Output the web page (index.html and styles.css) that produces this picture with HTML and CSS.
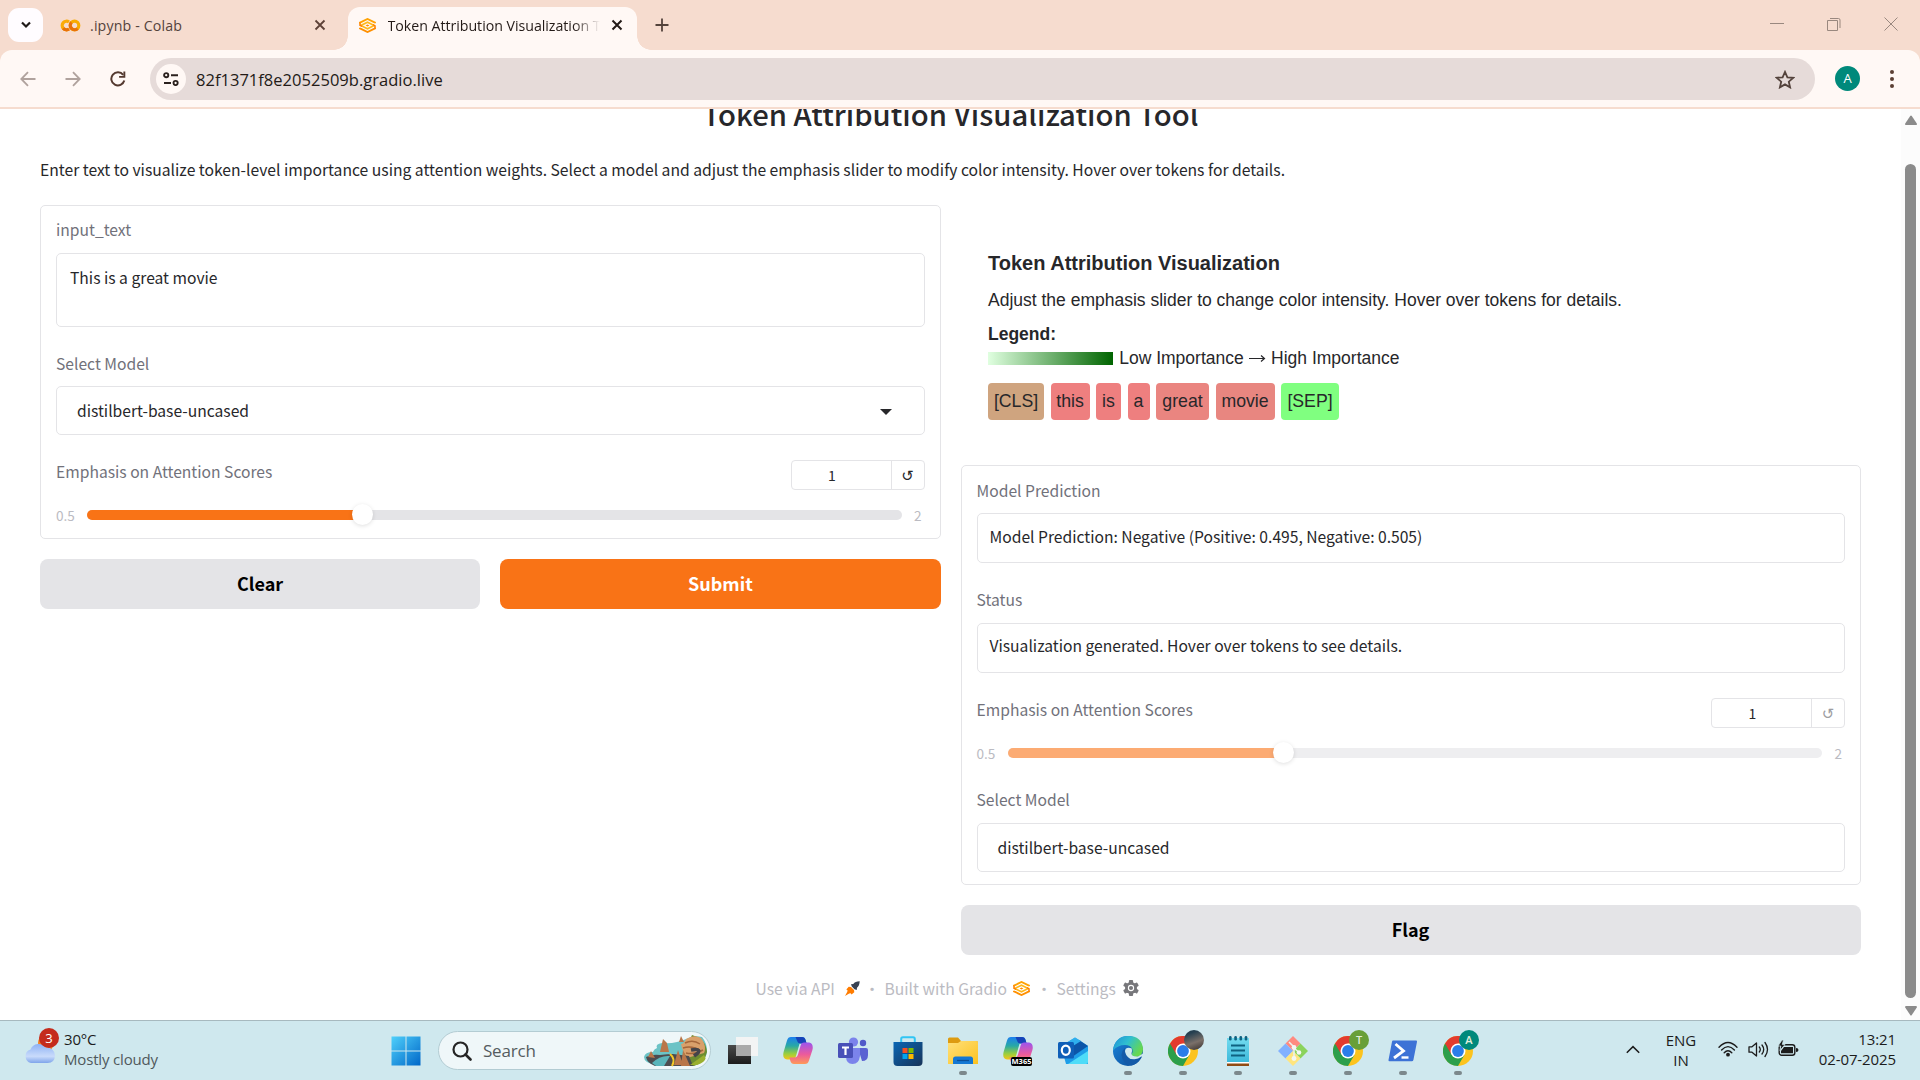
FILE: index.html
```html
<!DOCTYPE html>
<html lang="en">
<head>
<meta charset="utf-8">
<title>Token Attribution Visualization Tool</title>
<link rel="stylesheet" href="styles.css">
</head>
<body>
<svg class="defs" width="0" height="0" aria-hidden="true">
  <defs>
    <linearGradient id="win" x1="0" y1="0" x2="1" y2="1"><stop offset="0" stop-color="#4fd0fb"/><stop offset="1" stop-color="#0067c8"/></linearGradient>
    <linearGradient id="cloud" x1="0" y1="0" x2="0" y2="1"><stop offset="0" stop-color="#8eb2f4"/><stop offset=".65" stop-color="#c9dbfb"/><stop offset="1" stop-color="#7fa5ea"/></linearGradient>
    <linearGradient id="copL" x1="0" y1="0" x2="0" y2="1"><stop offset="0" stop-color="#1b7ff0"/><stop offset=".4" stop-color="#29a9a4"/><stop offset=".75" stop-color="#9bcf3c"/><stop offset="1" stop-color="#f7c516"/></linearGradient>
    <linearGradient id="copR" x1="0" y1="0" x2="0" y2="1"><stop offset="0" stop-color="#9a55ee"/><stop offset=".55" stop-color="#ec5a9c"/><stop offset="1" stop-color="#ff9a58"/></linearGradient>
    <linearGradient id="store" x1="0" y1="0" x2="1" y2="1"><stop offset="0" stop-color="#0a66b4"/><stop offset="1" stop-color="#173358"/></linearGradient>
    <linearGradient id="fold" x1="0" y1="0" x2="1" y2="1"><stop offset="0" stop-color="#ffe07a"/><stop offset="1" stop-color="#fcc21f"/></linearGradient>
    <linearGradient id="edgeG" x1="0" y1="0" x2="1" y2=".5"><stop offset="0" stop-color="#1f8fd8"/><stop offset=".5" stop-color="#2fbfd0"/><stop offset="1" stop-color="#67d84e"/></linearGradient>
    <linearGradient id="edgeB" x1="0" y1="0" x2="1" y2="1"><stop offset="0" stop-color="#1a86de"/><stop offset="1" stop-color="#0d4a94"/></linearGradient>
    <linearGradient id="note" x1="0" y1="0" x2="0" y2="1"><stop offset="0" stop-color="#73dbef"/><stop offset="1" stop-color="#35b5d8"/></linearGradient>
    <linearGradient id="tvd" x1="0" y1="0" x2="0" y2="1"><stop offset="0" stop-color="#4a4a4a"/><stop offset="1" stop-color="#1c1c1c"/></linearGradient>
    <symbol id="gradio" viewBox="0 0 17 15">
      <path d="M1 5.300V4.600L8.500 1l7.500 3.600v.700" fill="none" stroke="#ffa305" stroke-width="1.900"/>
      <path d="M1 9.700v.700L8.500 14l7.500-3.600v-.700" fill="none" stroke="#ff9000" stroke-width="1.900"/>
      <path d="M1.800 7.500L8.500 4.200l6.700 3.300-6.700 3.300z" fill="none" stroke="#ffb81c" stroke-width="1.700"/>
      <path d="M1 4.500v2.500l2 1.500M16 10.500V8l-2-1.500" fill="none" stroke="#ff7c00" stroke-width="1.500"/>
      <path d="M6.600 7.500l1.900-1 1.900 1-1.900 1z" fill="#ff8a00"/>
    </symbol>
    <symbol id="chrome" viewBox="0 0 30 30">
      <circle cx="15" cy="15" r="15" fill="#fcc31e"/>
      <path d="M15 15L2 7.500A15 15 0 0 0 15 30l6.500-11.300z" fill="#2c9f4b"/>
      <path d="M15 7.500H28A15 15 0 0 0 2 7.500l6.500 11.300z" fill="#e33b2e"/>
      <circle cx="15" cy="15" r="7.500" fill="#fff"/><circle cx="15" cy="15" r="5.900" fill="#2b7de9"/>
    </symbol>
    <symbol id="copilot" viewBox="0 0 30 30">
      <path d="M8 1h11c2 0 3 1 3.600 3l1 3.500h-7L13 20c-.7 2.500-2 3.500-4 3.500H4C.6 23.500-.4 20 .6 16L4 4.500C4.700 2 6 1 8 1z" fill="url(#copL)"/>
      <path d="M12.500 1H19c2 0 3 1 3.600 3l1 3.500h-6.100c-2 0-2.900-1-3.500-3z" fill="#1643b8"/>
      <path d="M22 28H11c-2 0-3-1-3.600-3l-1-3.500h5c2 0 3-1 3.600-3l2.600-9c.6-2 1.600-3 3.400-3h5c3.400 0 4.400 4 3.400 7.500L26 24.500c-.7 2.500-2 3.500-4 3.500z" fill="url(#copR)"/>
    </symbol>
  </defs>
</svg>

<div class="screen">
  <header class="tabstrip">
    <button class="tab-search"><svg width="12" height="8" viewBox="0 0 12 8"><path d="M2 1.500L6 5.500 10 1.500" fill="none" stroke="#1f1a18" stroke-width="2.200"/></svg></button>
    <div class="tab tab-idle">
      <svg width="21" height="13" viewBox="0 0 21 13"><g fill="none" stroke-width="3.200"><circle cx="14.500" cy="6.500" r="4.300" stroke="#f9ab00"/><path d="M11.460 3.460a4.300 4.300 0 0 0 6.080 6.080" stroke="#e8710a"/><path d="M9 3a4.300 4.300 0 1 0 0 7" stroke="#fbab08"/><path d="M3.200 9.300a4.300 4.300 0 0 0 5.800.700" stroke="#e8710a"/></g></svg>
      <span class="tab-name">.ipynb - Colab</span>
      <svg class="x" width="12" height="12" viewBox="0 0 12 12"><path d="M1.500 1.500l9 9m0-9l-9 9" stroke="#5d4138" stroke-width="1.800"/></svg>
    </div>
    <div class="tab tab-active">
      <svg width="17" height="15"><use href="#gradio"/></svg>
      <span class="tab-name">Token Attribution Visualization T</span>
      <svg class="x" width="12" height="12" viewBox="0 0 12 12"><path d="M1.500 1.500l9 9m0-9l-9 9" stroke="#231a17" stroke-width="2"/></svg>
    </div>
    <svg class="newtab" width="14" height="14" viewBox="0 0 14 14"><path d="M7 .5v13M.5 7h13" stroke="#54433c" stroke-width="1.800"/></svg>
    <div class="winctl">
      <svg width="14" height="14" viewBox="0 0 14 14"><path d="M0 6.500h14" stroke="#99887f" stroke-width="1"/></svg>
      <svg width="14" height="14" viewBox="0 0 14 14"><path d="M.5 3.500h10v10H.5zM3 1.500h8.500q1.500 0 1.500 1.500V11" fill="none" stroke="#99887f"/></svg>
      <svg width="14" height="14" viewBox="0 0 14 14"><path d="M.5.500l13 13m0-13l-13 13" stroke="#99887f"/></svg>
    </div>
  </header>

  <div class="toolbar-wrap">
  <nav class="toolbar">
    <div class="nav-icons">
      <svg width="16" height="16" viewBox="0 0 16 16"><path d="M15.500 8H1.500M8 1.200L1.300 8 8 14.800" fill="none" stroke="#b0a29d" stroke-width="1.800"/></svg>
      <svg width="16" height="16" viewBox="0 0 16 16"><path d="M.5 8h14M8 1.200L14.700 8 8 14.800" fill="none" stroke="#b0a29d" stroke-width="1.800"/></svg>
      <svg width="16" height="16" viewBox="0 0 16 16"><path d="M13.200 3.900A6.600 6.600 0 1 0 14.300 9.600" fill="none" stroke="#54392f" stroke-width="2"/><path d="M15.300.6v6.200H9.100V4.900h4.300V.6z" fill="#54392f"/></svg>
    </div>
    <div class="omnibox">
      <span class="site"><svg width="16" height="14" viewBox="0 0 16 14"><g fill="none" stroke="#2b211e" stroke-width="1.900"><circle cx="3.200" cy="3.200" r="2.100"/><path d="M8 3.200h7M1 11h7"/><circle cx="12.600" cy="11" r="2.100"/></g></svg></span>
      <span class="url">82f1371f8e2052509b.gradio.live</span>
      <svg class="star" width="20" height="19" viewBox="0 0 20 19"><path d="M10 1.900l2.400 5.400 5.800.5-4.400 3.900 1.300 5.700L10 14.400l-5.100 3 1.300-5.700L1.800 7.800l5.800-.5z" fill="none" stroke="#54433c" stroke-width="1.800"/></svg>
    </div>
    <span class="avatar">A</span>
    <svg class="kebab" width="6" height="20" viewBox="0 0 6 20"><g fill="#5b3f33"><circle cx="3" cy="3" r="2"/><circle cx="3" cy="10" r="2"/><circle cx="3" cy="17" r="2"/></g></svg>
  </nav>
  </div>

  <div class="viewport">
    <main class="page">
      <h1 class="title">Token Attribution Visualization Tool</h1>
      <p class="intro">Enter text to visualize token-level importance using attention weights. Select a model and adjust the emphasis slider to modify color intensity. Hover over tokens for details.</p>
      <div class="columns">
        <section class="col">
          <div class="card card-in">
            <label class="lab">input_text</label>
            <div class="field area">This is a great movie</div>
            <label class="lab">Select Model</label>
            <div class="field pick">distilbert-base-uncased<svg class="caret" width="12" height="6" viewBox="0 0 12 6"><path d="M0 0h12L6 6z" fill="#27272a"/></svg></div>
            <div class="range-head"><label class="lab">Emphasis on Attention Scores</label><div class="num"><span>1</span><b>↺</b></div></div>
            <div class="range"><span class="lo">0.5</span><div class="track"><i class="fill"></i><i class="thumb"></i></div><span class="hi">2</span></div>
          </div>
          <div class="buttons"><button class="btn grey">Clear</button><button class="btn orange">Submit</button></div>
        </section>
        <section class="col">
          <div class="viz">
            <h3>Token Attribution Visualization</h3>
            <p class="viz-note">Adjust the emphasis slider to change color intensity. Hover over tokens for details.</p>
            <p class="legend-name">Legend:</p>
            <div class="legend"><i></i><span>Low Importance</span><svg width="17" height="9" viewBox="0 0 17 9"><path d="M0 4.500h15.500M12 1.500l3.500 3-3.500 3" fill="none" stroke="#27272a" stroke-width="1.200"/></svg><span>High Importance</span></div>
            <div class="tokens"><span class="tok t0">[CLS]</span><span class="tok t1">this</span><span class="tok t2">is</span><span class="tok t3">a</span><span class="tok t4">great</span><span class="tok t5">movie</span><span class="tok t6">[SEP]</span></div>
          </div>
          <div class="card card-out">
            <label class="lab">Model Prediction</label>
            <div class="field line">Model Prediction: Negative (Positive: 0.495, Negative: 0.505)</div>
            <label class="lab">Status</label>
            <div class="field line status">Visualization generated. Hover over tokens to see details.</div>
            <div class="range-head"><label class="lab">Emphasis on Attention Scores</label><div class="num dim"><span>1</span><b>↺</b></div></div>
            <div class="range off"><span class="lo">0.5</span><div class="track"><i class="fill"></i><i class="thumb"></i></div><span class="hi">2</span></div>
            <label class="lab">Select Model</label>
            <div class="field pick">distilbert-base-uncased</div>
          </div>
          <button class="btn grey flag">Flag</button>
        </section>
      </div>
      <footer class="foot">
        <span class="f1">Use via API</span>
        <svg class="rocket" width="15" height="15" viewBox="0 0 15 15"><path d="M14.700.3Q10 .5 8.300 3L6 3.300 6.800 5.500 9.500 8.200l2.200.8.300-2.300Q14.500 5 14.700.3z" fill="#384152"/><path d="M6 6l3 3 .3 2.200-2.800 2.300-.8-1.200-1.500.2L0 15l2.300-4.200L2.500 9.200 1.300 8.500 3.700 5.700z" fill="#ff7c00"/></svg>
        <span class="dot">·</span>
        <span class="f2">Built with Gradio</span>
        <svg class="fg" width="17" height="15"><use href="#gradio"/></svg>
        <span class="dot">·</span>
        <span class="f3">Settings</span>
        <svg class="gear" width="16" height="16" viewBox="0 0 16 16"><g fill="#77777b"><rect x="5.900" y="0" width="4.200" height="16" rx="1"/><rect x="5.900" y="0" width="4.200" height="16" rx="1" transform="rotate(60 8 8)"/><rect x="5.900" y="0" width="4.200" height="16" rx="1" transform="rotate(120 8 8)"/><circle cx="8" cy="8" r="6"/></g><circle cx="8" cy="8" r="2.600" fill="none" stroke="#fff" stroke-width="1.100"/></svg>
      </footer>
    </main>
    <aside class="scroll">
      <svg width="12" height="10" viewBox="0 0 12 10"><path d="M5.200 1q.8-1 1.600 0l5 7.500q.5 1.500-1 1.500H1.200Q-.3 10 .2 8.500z" fill="#8b8b8b"/></svg>
      <i class="bar"></i>
      <svg width="12" height="10" viewBox="0 0 12 10"><path d="M5.200 9q.8 1 1.600 0l5-7.500Q12.300 0 10.800 0H1.200Q-.3 0 .2 1.500z" fill="#8b8b8b"/></svg>
    </aside>
  </div>

  <div class="taskbar">
    <div class="weather">
      <span class="w-icon"><svg width="32" height="38" viewBox="0 0 32 38"><circle cx="22" cy="16" r="8" fill="#f58220"/><path d="M7 36a7 7 0 0 1-.5-13.500A9 9 0 0 1 22 20.500a8 8 0 0 1 9 8q-.3 7.500-7.500 7.500z" fill="url(#cloud)"/></svg><em>3</em></span>
      <span class="w-text"><span>30°C</span><span class="w-sub">Mostly cloudy</span></span>
    </div>
    <div class="dock">
      <svg class="start" width="30" height="30" viewBox="0 0 30 30"><path d="M.5.500h14v14H.5zM15.500.500h14v14h-14zM.5 15.500h14v14H.5zM15.500 15.500h14v14h-14z" fill="url(#win)"/></svg>
      <div class="search">
        <svg width="20" height="20" viewBox="0 0 20 20"><circle cx="8.500" cy="8.500" r="7" fill="none" stroke="#252525" stroke-width="2.200"/><path d="M13.500 13.500l5 5" stroke="#252525" stroke-width="2.600" stroke-linecap="round"/></svg>
        <span>Search</span>
        <svg class="scene" width="64" height="32" viewBox="0 0 64 32"><path d="M0 22Q1 17 9 17q1-3 4-4-2-4 5-5 14 1 24-4 8-4 16-2 5 6 5 14 0 9-12 14H12Q0 28 0 22z" fill="#6cc3c6"/><path d="M48 0q14 4 15 17-2 10-13 14H34z" fill="#6d8c2f"/><path d="M42 4q8-5 15-1 6 8 3 15l-17 5q-5-8-6-14 3 0 5-5z" fill="#d9a06b"/><path d="M41 8q8-4 15 1M39 13q9-3 18 3M42 18q9 2 17-3" stroke="#a5663a" stroke-width="1.500" fill="none"/><path d="M47 15q10-2 7 3l-4 3" fill="none" stroke="#44444a" stroke-width="3.500"/><path d="M2 22q6-3 14-2 8-1 13-1l16 2 4 10H11Q3 28 2 22z" fill="#4c4c50"/><path d="M8 28q8-8 18-7l-6 10H12z" fill="#5ab4ba"/><path d="M26 19q6 5 2 12" stroke="#f7c925" stroke-width="2" fill="none"/><path d="M16 17L19 4l4 4 2 9zM4 22l3-6 4 7zM35 7l2-6 3 6zM30 30l4-15 5 15zM37 31l2-16 7 16z" fill="#b9764a"/><path d="M46 30l14-10q5 6-7 10z" fill="#9aaf2f"/></svg>
      </div>
      <div class="app"><svg class="tv" width="30" height="30" viewBox="0 0 30 30"><path d="M0 9h23v19H0z" fill="url(#tvd)"/><path d="M8 1h22v19H8z" fill="#f3f4f4"/><path d="M8 9h15v11H8z" fill="#aaa"/></svg></div>
      <div class="app"><svg width="30" height="30"><use href="#copilot"/></svg></div>
      <div class="app"><svg width="30" height="30" viewBox="0 0 30 30"><circle cx="25" cy="7" r="3.200" fill="#5059c9"/><path d="M20 12h8q2 0 2 2v5q0 6-6 6z" fill="#5b62d2"/><circle cx="15.500" cy="6" r="4.600" fill="#7b83eb"/><path d="M8 12h14v8q-1 8-7.500 8T8 20z" fill="#7b83eb"/><rect y="7" width="15" height="15" rx="1.500" fill="#4850b8"/><path d="M4 10.500h7v2H8.600V19H6.400v-6.500H4z" fill="#fff"/></svg></div>
      <div class="app"><svg width="30" height="30" viewBox="0 0 30 30"><path d="M8.200 6.500V3q0-1.700 1.700-1.700h10.200q1.700 0 1.700 1.700v3.500" fill="none" stroke="#32c5f4" stroke-width="2"/><path d="M.5 6h29v20q0 4-4 4h-21q-4 0-4-4z" fill="url(#store)"/><path d="M9.500 12h5v5h-5z" fill="#f25022"/><path d="M15.500 12h5v5h-5z" fill="#7fba00"/><path d="M9.500 18h5v5h-5z" fill="#00a4ef"/><path d="M15.500 18h5v5h-5z" fill="#ffb900"/></svg></div>
      <div class="app run"><svg width="30" height="30" viewBox="0 0 30 30"><path d="M0 3q0-1.500 1.500-1.500H10L13 5h15.500q1.500 0 1.500 1.500V14H0z" fill="#dd9b10"/><path d="M0 7h10l3-2h15.500Q30 5 30 6.500V28H0z" fill="url(#fold)"/><path d="M5 28v-5q0-2.500 2.500-2.500h15q2.500 0 2.500 2.500v5z" fill="#1478d4"/><path d="M9 24.500h12" stroke="#0b4f98" stroke-width="1.300"/></svg></div>
      <div class="app"><svg width="30" height="30"><use href="#copilot"/></svg><em class="m365">M365</em></div>
      <div class="app"><svg width="30" height="30" viewBox="0 0 30 30"><path d="M3 10L17 1.500 30 10v18H8z" fill="#1e9de8"/><path d="M12 10l9-6 9 6-16 11z" fill="#0c55a8"/><path d="M7 8l10-6.500L23 5 10 13z" fill="#2fb0ee"/><path d="M10 28l20-13v11q0 2-2 2z" fill="#4fdcf8"/><rect y="6" width="16" height="16.500" rx="1.500" fill="#0f5fb8"/><ellipse cx="7.800" cy="14.200" rx="4" ry="4.600" fill="none" stroke="#fff" stroke-width="2.200"/></svg></div>
      <div class="app run"><svg width="30" height="30" viewBox="0 0 30 30"><circle cx="15" cy="15" r="15" fill="url(#edgeB)"/><path d="M.3 12.500Q3 0 15 0q14 0 15 13 0 7-7 8-5 0-4.500-3 2-2 .8-5-2-4-7.300-4Q4.500 9 .3 14.500z" fill="url(#edgeG)"/><path d="M18.500 12.300q-7-2-6.500 4.500 1.500 7 9.500 6.500 4-.5 6.500-2.500l3-1V17l-6 3.500q-7 .5-6.500-3.500 1-2 0-4.700z" fill="#cfe8ee"/><path d="M12 12q-7 6 0 15 3 3 7 2.500 6-2 8.500-7-6 3-11 0-5.500-4-4.500-10.500z" fill="#145aa8"/></svg></div>
      <div class="app run"><svg width="30" height="30"><use href="#chrome"/></svg><em class="who pic"></em></div>
      <div class="app run"><svg width="30" height="30" viewBox="0 0 30 30"><path d="M4 2h22v27H4z" fill="url(#note)"/><path d="M4 26.500h22V30H4z" fill="#8f4b14"/><path d="M4 26h22v1.500H4z" fill="#fff"/><path d="M8 9.500h14M8 14.500h14M8 19.500h14" stroke="#0f6281" stroke-width="2"/><g fill="#0f6281"><rect x="6" width="2.600" height="4.500" rx="1.200"/><rect x="11.300" width="2.600" height="4.500" rx="1.200"/><rect x="16.500" width="2.600" height="4.500" rx="1.200"/><rect x="21.700" width="2.600" height="4.500" rx="1.200"/></g></svg></div>
      <div class="app run"><svg width="30" height="30" viewBox="0 0 30 30"><path d="M15 0l7.500 7.500L15 15 7.500 7.500z" fill="#ff8a80"/><path d="M22.500 7.500L30 15l-7.500 7.500L15 15z" fill="#8bd35c"/><path d="M7.500 7.500L15 15l-7.500 7.500L0 15z" fill="#82b1ff"/><path d="M15 15l7.500 7.500L15 30l-7.500-7.500z" fill="#ffe57f"/><path d="M11 6l5 5v12M16 12l5 4.500" fill="none" stroke="#e9f3ee" stroke-width="1.600"/><g fill="#f3f7f4"><circle cx="16" cy="11.500" r="2.400"/><circle cx="21" cy="16.500" r="2.300"/><circle cx="16" cy="22.500" r="2.400"/></g></svg></div>
      <div class="app run"><svg width="30" height="30"><use href="#chrome"/></svg><em class="who green">T</em></div>
      <div class="app run"><svg width="30" height="30" viewBox="0 0 30 30"><path d="M5 4.500h23q1.200 0 1 1.200L25.400 24q-.3 1.300-1.600 1.300H1.500q-1.200 0-1-1.200L4 5.800Q4.200 4.500 5 4.500z" fill="#3d72d6"/><path d="M7.500 8l8 7-9.500 7" fill="none" stroke="#fff" stroke-width="2.800"/><path d="M13.500 21.500h7" stroke="#fff" stroke-width="2.400"/></svg></div>
      <div class="app run"><svg width="30" height="30"><use href="#chrome"/></svg><em class="who teal">A</em></div>
    </div>
    <div class="tray">
      <svg class="up" width="14" height="9" viewBox="0 0 14 9"><path d="M.8 7.800L7 1.600l6.200 6.200" fill="none" stroke="#1c1c1c" stroke-width="1.500"/></svg>
      <div class="lang"><span>ENG</span><span>IN</span></div>
      <svg class="wifi" width="20" height="16" viewBox="0 0 20 16"><g fill="none" stroke="#1c1c1c" stroke-width="1.400" stroke-linecap="round"><path d="M1 6.200q9-9.500 18 0M3.600 9q6.400-6.700 12.800 0M6.200 11.700q3.800-4 7.600 0"/></g><circle cx="10" cy="13.700" r="1.900" fill="#1c1c1c"/></svg>
      <svg class="vol" width="21" height="17" viewBox="0 0 21 17"><g fill="none" stroke="#1c1c1c" stroke-width="1.300" stroke-linejoin="round" stroke-linecap="round"><path d="M1 5.800h3L8.500 2v13L4 11.200H1zM11.300 6q2 2.500 0 5M14 4q3.400 4.500 0 9M17 1.500q5 7 0 14"/></g></svg>
      <svg class="batt" width="21" height="17" viewBox="0 0 21 17"><rect x="1.200" y="4.700" width="15.600" height="10.600" rx="2.500" fill="none" stroke="#1c1c1c" stroke-width="1.400"/><path d="M6 7h9v6.200H3V11z" fill="#1c1c1c"/><path d="M18 8q2.500 0 2.500 2t-2.500 2z" fill="#1c1c1c"/><path d="M4 0L0 6h2.800L2 10.500 7 4.500H4.300L5.500 0z" fill="#1c1c1c" stroke="#cfe8ee" stroke-width=".8"/></svg>
      <div class="clock"><span>13:21</span><span>02-07-2025</span></div>
    </div>
  </div>
</div>
</body>
</html>
```
FILE: styles.css
```css
* { box-sizing: border-box; margin: 0; padding: 0; }
body { background: #fff; font-family: "Noto Sans CJK SC", sans-serif; color: #27272a; }
i, em, b { font-style: normal; font-weight: 400; }
svg { display: block; flex: none; }
button { border: 0; font: inherit; }
.defs { position: absolute; }
.screen { width: 1920px; height: 1080px; overflow: hidden; display: flex; flex-direction: column; }

/* tab strip */
.tabstrip { height: 50px; flex: none; background: #f6dccf; display: flex; align-items: flex-start; padding-left: 8px; font: 14.2px/20px "Open Sans", sans-serif; }
.tab-search { width: 35px; height: 34px; margin-top: 8px; border-radius: 11px; background: #fffcff; display: flex; align-items: center; justify-content: center; }
.tab { display: flex; align-items: center; }
.tab-idle { width: 305px; height: 50px; padding-left: 17px; color: #54433c; }
.tab-idle .tab-name { margin-left: 9px; padding-top: 1px; flex: 1; letter-spacing: .15px; }
.tab-idle .x { margin-right: 22px; }
.tab-active { position: relative; width: 289px; height: 43px; margin-top: 7px; padding: 0 14px 7px 11px; border-radius: 12px 12px 0 0; background: #fff8f5; color: #231a17; }
.tab-active::before, .tab-active::after { content: ""; position: absolute; bottom: 0; width: 14px; height: 14px; }
.tab-active::before { left: -14px; background: radial-gradient(circle at 0 0, #f6dccf 13.5px, #fff8f5 14px); }
.tab-active::after { right: -14px; background: radial-gradient(circle at 100% 0, #f6dccf 13.5px, #fff8f5 14px); }
.tab-active .tab-name { width: 212px; margin-left: 11.5px; padding-top: 1px; white-space: nowrap; overflow: hidden; letter-spacing: -.03px; -webkit-mask-image: linear-gradient(90deg, #000 185px, transparent 212px); mask-image: linear-gradient(90deg, #000 185px, transparent 212px); }
.tab-active .x { margin-left: auto; }
.newtab { margin: 18px 0 0 18px; }
.winctl { margin: 17px 22px 0 auto; display: flex; gap: 43px; }

/* toolbar */
.toolbar-wrap { flex: none; height: 59px; background: #f6dccf; }
.toolbar { height: 57px; background: #fff8f5; border-radius: 12px 12px 0 0; display: flex; align-items: center; padding-left: 20px; }
.nav-icons { display: flex; gap: 29px; width: 130px; }
.omnibox { width: 1665px; height: 42px; margin-top: 1px; border-radius: 21px; background: #e6dbd9; display: flex; align-items: center; padding: 0 20px 0 6px; }
.site { width: 30px; height: 30px; border-radius: 50%; background: #fff8f5; display: flex; align-items: center; justify-content: center; }
.url { margin-left: 10px; padding-top: 1px; flex: 1; font: 16.5px/24px "Open Sans", sans-serif; letter-spacing: .02px; color: #231a17; }
.avatar { width: 25px; height: 25px; margin-left: 20px; border-radius: 50%; background: #00897b; color: #fff; font: 13px/25px "Open Sans", sans-serif; text-align: center; }
.kebab { margin-left: 29px; }

/* page */
.viewport { flex: none; height: 911px; display: flex; overflow: hidden; }
.page { width: 1901px; padding: 0 40px; }
.title { height: 48px; margin-top: -16px; text-align: center; font-size: 29.25px; line-height: 40px; font-weight: 500; white-space: nowrap; }
.intro { height: 26px; margin-top: 16px; font-size: 15.68px; line-height: 26px; white-space: nowrap; }
.columns { display: flex; gap: 20px; margin-top: 22px; }
.col { width: 900.5px; flex: none; }
.card { border: 1px solid #e4e4e7; border-radius: 5px; padding: 0 15px; }
.lab { display: block; font-size: 15.65px; line-height: 24px; color: #71717a; }
.field { border: 1px solid #e4e4e7; border-radius: 5px; font-size: 15.65px; line-height: 24px; white-space: nowrap; }
.card-in { height: 334px; padding-top: 12px; }
.area { height: 74px; margin: 11px 0 25px; padding: 12px 13px; }
.pick { height: 49px; padding: 0 20px; display: flex; align-items: center; justify-content: space-between; }
.card-in .pick { margin-top: 10px; }
.caret { margin-right: 11.5px; margin-top: 3px; }
.range-head { display: flex; justify-content: space-between; margin-top: 25px; }
.num { width: 134px; height: 30px; border: 1px solid #e4e4e7; border-radius: 4px; display: flex; font-size: 14px; line-height: 28px; text-align: center; }
.num span { width: 99px; padding-right: 18px; }
.num b { flex: 1; border-left: 1px solid #e4e4e7; font: 15px/30px "DejaVu Sans", sans-serif; }
.dim b { color: #9d9da2; }
.range { display: flex; align-items: center; height: 20px; margin-top: 15px; font-size: 13.6px; color: #bbbbc2; }
.lo { width: 31px; }
.hi { width: 23px; padding-left: 12.5px; }
.track { position: relative; width: 815px; height: 10px; border-radius: 5px; background: #e4e4e7; }
.fill { display: block; width: 275px; height: 10px; border-radius: 5px 0 0 5px; background: #f97316; }
.thumb { position: absolute; left: 265px; top: -6px; width: 21px; height: 21px; border-radius: 50%; background: #fff; box-shadow: 0 1px 4px rgba(0,0,0,.13); }
.off .lo { width: 31.5px; }
.off .track { background: #eeeef0; }
.off .fill { background: #fcab73; }
.buttons { display: flex; gap: 20px; margin-top: 20px; }
.btn { flex: 1; height: 50px; padding-bottom: 2px; border-radius: 8px; font-size: 18px; font-weight: 600; line-height: 48px; }
.grey { background: #e4e4e7; color: #000; }
.orange { background: #f97316; color: #fff; }

.viz { height: 260px; padding: 43px 0 0 27.5px; font-family: "Liberation Sans", Arial, sans-serif; font-size: 17.5px; white-space: nowrap; }
.viz h3 { font-size: 20px; line-height: 30px; }
.viz-note { margin-top: 8px; line-height: 28px; }
.legend-name { margin-top: 6px; font-weight: 700; line-height: 28px; }
.legend { display: flex; align-items: center; height: 22px; gap: 5.2px; margin-top: -1px; }
.legend i { width: 125px; height: 13px; margin-right: 1px; background: linear-gradient(90deg, #e0ffe0, #006400); }
.tokens { display: flex; gap: 6.5px; margin-top: 14px; font-size: 17.7px; }
.tok { height: 37px; border-radius: 4px; line-height: 36px; text-align: center; }
.t0 { width: 56px; background: #cfa47f; }
.t1 { width: 39px; background: #ee7f7f; }
.t2 { width: 25px; background: #ee7f7f; }
.t3 { width: 22px; background: #ee7f7f; }
.t4 { width: 53px; background: #ea8580; }
.t5 { width: 59px; background: #e88680; }
.t6 { width: 58px; background: #80ff80; }
.card-out { height: 420px; padding-top: 13px; }
.line { height: 50px; padding: 11px 12px; margin: 10px 0 25px; }
.status { margin: 11px 0 0; padding-top: 10px; }
.card-out .range { margin-bottom: 25px; }
.card-out .pick { margin-top: 11px; }
.flag { display: block; width: 900px; margin-top: 20px; }

.foot { display: flex; align-items: center; height: 26px; margin-top: 20px; padding-left: 715.5px; font-size: 15.65px; color: #bbbbc2; white-space: nowrap; }
.f1 { width: 89px; }
.f2 { width: 128px; }
.f3 { width: 66px; }
.dot { width: 25px; text-align: center; }
.fg + .dot { width: 27px; padding-left: 2px; }

.scroll { width: 19px; background: #fcfcfc; display: flex; flex-direction: column; align-items: center; padding-top: 6px; }
.bar { width: 11px; height: 834px; margin: 39px 0 8px; border-radius: 6px; background: #8b8b8b; }

/* taskbar */
.taskbar { flex: none; height: 60px; border-top: 1px solid #a7b9bf; background: #cfe8ee; display: flex; font: 15px/20px "Open Sans", sans-serif; color: #1c1c1c; }
.weather { width: 391px; display: flex; padding-left: 24px; }
.w-icon { position: relative; width: 40px; padding-top: 6px; }
.w-icon em { position: absolute; left: 15px; top: 7px; width: 20px; height: 20px; border-radius: 50%; background: #c42b1c; color: #fff; font-size: 13px; text-align: center; }
.w-text { display: flex; flex-direction: column; padding-top: 8px; letter-spacing: -.17px; }
.w-sub { color: #50595c; }
.dock { width: 1095px; display: flex; align-items: center; }
.search { width: 273px; height: 39px; margin: 0 4px 0 17px; border: 1px solid #b3ccd3; border-radius: 20px; background: #eff7f9; display: flex; align-items: center; padding: 0 2px 0 13px; font-size: 17px; color: #555c5f; }
.search span { margin-left: 11px; flex: 1; letter-spacing: -.2px; }
.app { position: relative; width: 55px; height: 58px; display: flex; align-items: center; justify-content: center; }
.run::after { content: ""; position: absolute; left: 24px; bottom: 5px; width: 8px; height: 4px; border-radius: 2px; background: #7c888c; }
.m365 { position: absolute; left: 21px; top: 35px; width: 21px; height: 9px; border-radius: 2px; background: #000; color: #fff; font: 700 7.5px/9px "Open Sans", sans-serif; text-align: center; }
.who { position: absolute; left: 29px; top: 8px; width: 20px; height: 20px; border-radius: 50%; color: #e3efdc; font-size: 11px; font-weight: 600; text-align: center; }
.pic { background: linear-gradient(160deg, #253f50 20%, #7b7069 60%, #342d2b); }
.green { background: #689f38; }
.teal { background: #00897b; }
.tray { flex: 1; display: flex; align-items: flex-start; }
.up { margin: 24px 0 0 140px; }
.lang { width: 50px; margin: 9px 0 0 16px; display: flex; flex-direction: column; text-align: center; }
.wifi { margin: 20px 0 0 12px; }
.vol { margin: 20px 0 0 10px; }
.batt { margin: 19px 0 0 9px; }
.clock { margin: 8px 24px 0 auto; display: flex; flex-direction: column; text-align: right; letter-spacing: -.1px; }
```
